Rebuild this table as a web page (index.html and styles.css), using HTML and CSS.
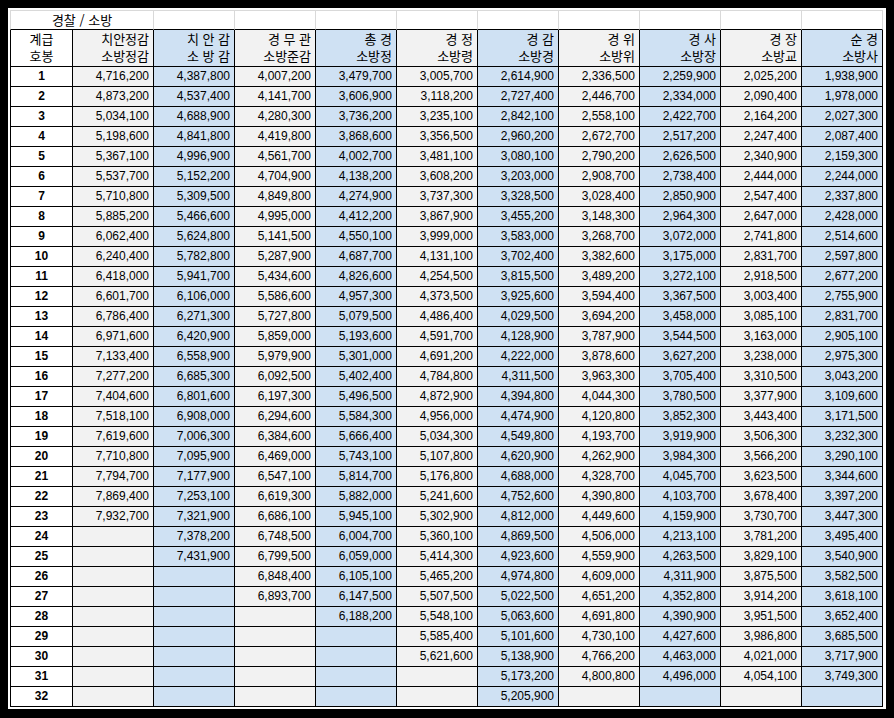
FILE: index.html
```html
<!DOCTYPE html>
<html lang="ko">
<head>
<meta charset="utf-8">
<title>경찰 / 소방 봉급표</title>
<link rel="stylesheet" href="styles.css">
</head>
<body>
<div class="sheet">
<table class="pay">
<colgroup>
<col class="col-key">
<col class="col-gray"><col class="col-blue"><col class="col-gray"><col class="col-blue"><col class="col-gray">
<col class="col-blue"><col class="col-gray"><col class="col-blue"><col class="col-gray"><col class="col-blue">
</colgroup>
<thead>
<tr class="title-row"><td colspan="2" class="title">경찰 / 소방</td><td></td><td></td><td></td><td></td><td></td><td></td><td></td><td></td><td></td></tr>
<tr class="head-row">
<th class="corner">계급<br>호봉</th>
<th>치안정감<br>소방정감</th>
<th>치 안 감<br>소 방 감</th>
<th>경 무 관<br>소방준감</th>
<th>총 경<br>소방정</th>
<th>경 정<br>소방령</th>
<th>경 감<br>소방경</th>
<th>경 위<br>소방위</th>
<th>경 사<br>소방장</th>
<th>경 장<br>소방교</th>
<th>순 경<br>소방사</th>
</tr>
</thead>
<tbody>
<tr><th>1</th><td>4,716,200</td><td>4,387,800</td><td>4,007,200</td><td>3,479,700</td><td>3,005,700</td><td>2,614,900</td><td>2,336,500</td><td>2,259,900</td><td>2,025,200</td><td>1,938,900</td></tr>
<tr><th>2</th><td>4,873,200</td><td>4,537,400</td><td>4,141,700</td><td>3,606,900</td><td>3,118,200</td><td>2,727,400</td><td>2,446,700</td><td>2,334,000</td><td>2,090,400</td><td>1,978,000</td></tr>
<tr><th>3</th><td>5,034,100</td><td>4,688,900</td><td>4,280,300</td><td>3,736,200</td><td>3,235,100</td><td>2,842,100</td><td>2,558,100</td><td>2,422,700</td><td>2,164,200</td><td>2,027,300</td></tr>
<tr><th>4</th><td>5,198,600</td><td>4,841,800</td><td>4,419,800</td><td>3,868,600</td><td>3,356,500</td><td>2,960,200</td><td>2,672,700</td><td>2,517,200</td><td>2,247,400</td><td>2,087,400</td></tr>
<tr><th>5</th><td>5,367,100</td><td>4,996,900</td><td>4,561,700</td><td>4,002,700</td><td>3,481,100</td><td>3,080,100</td><td>2,790,200</td><td>2,626,500</td><td>2,340,900</td><td>2,159,300</td></tr>
<tr><th>6</th><td>5,537,700</td><td>5,152,200</td><td>4,704,900</td><td>4,138,200</td><td>3,608,200</td><td>3,203,000</td><td>2,908,700</td><td>2,738,400</td><td>2,444,000</td><td>2,244,000</td></tr>
<tr><th>7</th><td>5,710,800</td><td>5,309,500</td><td>4,849,800</td><td>4,274,900</td><td>3,737,300</td><td>3,328,500</td><td>3,028,400</td><td>2,850,900</td><td>2,547,400</td><td>2,337,800</td></tr>
<tr><th>8</th><td>5,885,200</td><td>5,466,600</td><td>4,995,000</td><td>4,412,200</td><td>3,867,900</td><td>3,455,200</td><td>3,148,300</td><td>2,964,300</td><td>2,647,000</td><td>2,428,000</td></tr>
<tr><th>9</th><td>6,062,400</td><td>5,624,800</td><td>5,141,500</td><td>4,550,100</td><td>3,999,000</td><td>3,583,000</td><td>3,268,700</td><td>3,072,000</td><td>2,741,800</td><td>2,514,600</td></tr>
<tr><th>10</th><td>6,240,400</td><td>5,782,800</td><td>5,287,900</td><td>4,687,700</td><td>4,131,100</td><td>3,702,400</td><td>3,382,600</td><td>3,175,000</td><td>2,831,700</td><td>2,597,800</td></tr>
<tr><th>11</th><td>6,418,000</td><td>5,941,700</td><td>5,434,600</td><td>4,826,600</td><td>4,254,500</td><td>3,815,500</td><td>3,489,200</td><td>3,272,100</td><td>2,918,500</td><td>2,677,200</td></tr>
<tr><th>12</th><td>6,601,700</td><td>6,106,000</td><td>5,586,600</td><td>4,957,300</td><td>4,373,500</td><td>3,925,600</td><td>3,594,400</td><td>3,367,500</td><td>3,003,400</td><td>2,755,900</td></tr>
<tr><th>13</th><td>6,786,400</td><td>6,271,300</td><td>5,727,800</td><td>5,079,500</td><td>4,486,400</td><td>4,029,500</td><td>3,694,200</td><td>3,458,000</td><td>3,085,100</td><td>2,831,700</td></tr>
<tr><th>14</th><td>6,971,600</td><td>6,420,900</td><td>5,859,000</td><td>5,193,600</td><td>4,591,700</td><td>4,128,900</td><td>3,787,900</td><td>3,544,500</td><td>3,163,000</td><td>2,905,100</td></tr>
<tr><th>15</th><td>7,133,400</td><td>6,558,900</td><td>5,979,900</td><td>5,301,000</td><td>4,691,200</td><td>4,222,000</td><td>3,878,600</td><td>3,627,200</td><td>3,238,000</td><td>2,975,300</td></tr>
<tr><th>16</th><td>7,277,200</td><td>6,685,300</td><td>6,092,500</td><td>5,402,400</td><td>4,784,800</td><td>4,311,500</td><td>3,963,300</td><td>3,705,400</td><td>3,310,500</td><td>3,043,200</td></tr>
<tr><th>17</th><td>7,404,600</td><td>6,801,600</td><td>6,197,300</td><td>5,496,500</td><td>4,872,900</td><td>4,394,800</td><td>4,044,300</td><td>3,780,500</td><td>3,377,900</td><td>3,109,600</td></tr>
<tr><th>18</th><td>7,518,100</td><td>6,908,000</td><td>6,294,600</td><td>5,584,300</td><td>4,956,000</td><td>4,474,900</td><td>4,120,800</td><td>3,852,300</td><td>3,443,400</td><td>3,171,500</td></tr>
<tr><th>19</th><td>7,619,600</td><td>7,006,300</td><td>6,384,600</td><td>5,666,400</td><td>5,034,300</td><td>4,549,800</td><td>4,193,700</td><td>3,919,900</td><td>3,506,300</td><td>3,232,300</td></tr>
<tr><th>20</th><td>7,710,800</td><td>7,095,900</td><td>6,469,000</td><td>5,743,100</td><td>5,107,800</td><td>4,620,900</td><td>4,262,900</td><td>3,984,300</td><td>3,566,200</td><td>3,290,100</td></tr>
<tr><th>21</th><td>7,794,700</td><td>7,177,900</td><td>6,547,100</td><td>5,814,700</td><td>5,176,800</td><td>4,688,000</td><td>4,328,700</td><td>4,045,700</td><td>3,623,500</td><td>3,344,600</td></tr>
<tr><th>22</th><td>7,869,400</td><td>7,253,100</td><td>6,619,300</td><td>5,882,000</td><td>5,241,600</td><td>4,752,600</td><td>4,390,800</td><td>4,103,700</td><td>3,678,400</td><td>3,397,200</td></tr>
<tr><th>23</th><td>7,932,700</td><td>7,321,900</td><td>6,686,100</td><td>5,945,100</td><td>5,302,900</td><td>4,812,000</td><td>4,449,600</td><td>4,159,900</td><td>3,730,700</td><td>3,447,300</td></tr>
<tr><th>24</th><td></td><td>7,378,200</td><td>6,748,500</td><td>6,004,700</td><td>5,360,100</td><td>4,869,500</td><td>4,506,000</td><td>4,213,100</td><td>3,781,200</td><td>3,495,400</td></tr>
<tr><th>25</th><td></td><td>7,431,900</td><td>6,799,500</td><td>6,059,000</td><td>5,414,300</td><td>4,923,600</td><td>4,559,900</td><td>4,263,500</td><td>3,829,100</td><td>3,540,900</td></tr>
<tr><th>26</th><td></td><td></td><td>6,848,400</td><td>6,105,100</td><td>5,465,200</td><td>4,974,800</td><td>4,609,000</td><td>4,311,900</td><td>3,875,500</td><td>3,582,500</td></tr>
<tr><th>27</th><td></td><td></td><td>6,893,700</td><td>6,147,500</td><td>5,507,500</td><td>5,022,500</td><td>4,651,200</td><td>4,352,800</td><td>3,914,200</td><td>3,618,100</td></tr>
<tr><th>28</th><td></td><td></td><td></td><td>6,188,200</td><td>5,548,100</td><td>5,063,600</td><td>4,691,800</td><td>4,390,900</td><td>3,951,500</td><td>3,652,400</td></tr>
<tr><th>29</th><td></td><td></td><td></td><td></td><td>5,585,400</td><td>5,101,600</td><td>4,730,100</td><td>4,427,600</td><td>3,986,800</td><td>3,685,500</td></tr>
<tr><th>30</th><td></td><td></td><td></td><td></td><td>5,621,600</td><td>5,138,900</td><td>4,766,200</td><td>4,463,000</td><td>4,021,000</td><td>3,717,900</td></tr>
<tr><th>31</th><td></td><td></td><td></td><td></td><td></td><td>5,173,200</td><td>4,800,800</td><td>4,496,000</td><td>4,054,100</td><td>3,749,300</td></tr>
<tr><th>32</th><td></td><td></td><td></td><td></td><td></td><td>5,205,900</td><td></td><td></td><td></td><td></td></tr>
</tbody>
</table>
</div>
</body>
</html>
```
FILE: styles.css
```css
html, body {
  margin: 0;
  padding: 0;
}

body {
  background: #000;
  width: 894px;
  height: 718px;
  overflow: hidden;
}

.sheet {
  margin: 8px 0 0 8px;
  width: 878px;
  height: 701px;
  padding: 2px 0 0 2px;
  box-sizing: border-box;
  background: #fff;
}

.pay {
  border-collapse: separate;
  border-spacing: 0;
  table-layout: fixed;
  width: 873px;
  font-family: "Liberation Sans", Arial, "Noto Sans CJK KR", sans-serif;
  font-size: 12px;
  color: #000;
}

.col-key { width: 63px; }
.col-gray { width: 81px; background: #f2f2f2; }
.col-blue { width: 81px; background: #cfe1f3; }

.pay td,
.pay th {
  padding: 0 4px 0 0;
  border-right: 1px solid #000;
  border-bottom: 1px solid #000;
  text-align: right;
  vertical-align: middle;
  white-space: nowrap;
  overflow: hidden;
  font-weight: normal;
}

/* title row (spreadsheet grid above the table) */
.title-row td {
  height: 18px;
  padding: 0;
  background: #fff;
  border-top: 1px solid #d9d9d9;
  border-right: 1px solid #d9d9d9;
  border-bottom: 1px solid #000;
}

.title-row td:first-child {
  border-left: 1px solid #d9d9d9;
}

.title-row .title {
  text-align: center;
  font-family: "Noto Sans CJK KR", sans-serif;
  font-size: 13px;
  line-height: 18px;
}

/* column headers */
.head-row th {
  height: 36px;
  font-family: "Liberation Sans", "Noto Sans CJK KR", sans-serif;
  font-size: 13px;
  line-height: 17px;
}

.head-row .corner {
  text-align: center;
  padding: 0;
  background: #fff;
  border-left: 1px solid #000;
}

/* body rows */
.pay tbody td,
.pay tbody th {
  height: 19px;
  line-height: 19px;
}

.pay tbody th {
  text-align: center;
  padding: 0;
  font-weight: bold;
  background: #fff;
  border-left: 1px solid #000;
}
```
